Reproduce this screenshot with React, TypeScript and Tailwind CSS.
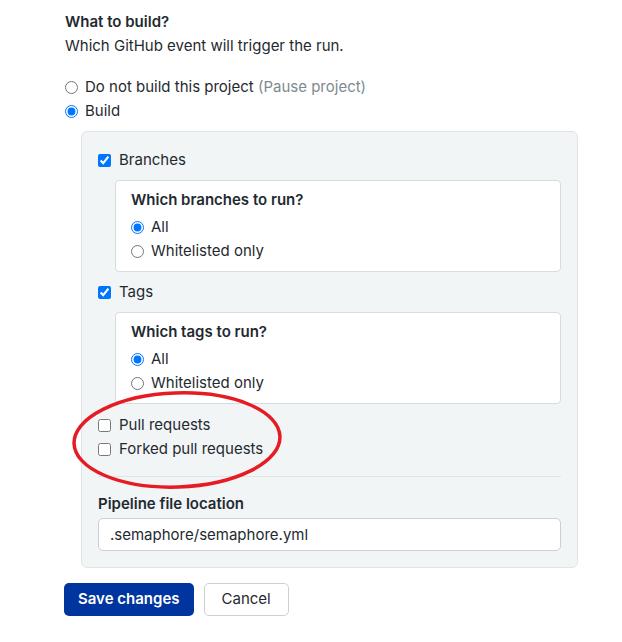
import React from 'react';

function Radio({ checked, label, extra }: { checked?: boolean; label: string; extra?: string }) {
    return (
        <label className="flex items-center h-6 gap-[7px]">
            <input type="radio" defaultChecked={checked} className="m-0 w-[13px] h-[13px] accent-[#0075ff]" />
            <span>
                {label}
                {extra && <span className="text-[#7d8a90]"> {extra}</span>}
            </span>
        </label>
    );
}

function Check({ checked, label }: { checked?: boolean; label: string }) {
    return (
        <label className="flex items-center h-6 gap-[8px]">
            <input type="checkbox" defaultChecked={checked} className="m-0 w-[13px] h-[13px] accent-[#0075ff]" />
            <span>{label}</span>
        </label>
    );
}

function RunBox({ title }: { title: string }) {
    return (
        <div className="ml-[17px] bg-white border border-[#d6dde0] rounded-[4px] px-[15px] pt-[7px] pb-[8px]">
            <div className="h-6 flex items-center font-semibold">{title}</div>
            <div className="mt-[3px]">
                <Radio checked label="All" />
                <Radio label="Whitelisted only" />
            </div>
        </div>
    );
}

export default function App() {
    return (
        <div className="relative w-[622px] h-[642px] bg-white font-['Inter',sans-serif] text-[15px] text-[#1f2a30]">
            <div className="pl-[65px] pt-[10px] w-[578px]">
                <div className="h-6 flex items-center font-semibold">What to build?</div>
                <div className="h-6 flex items-center">Which GitHub event will trigger the run.</div>

                <div className="mt-[17px]">
                    <Radio label="Do not build this project" extra="(Pause project)" />
                    <Radio checked label="Build" />
                </div>

                <div className="mt-[8px] ml-4 bg-[#f2f5f6] border border-[#dfe5e7] rounded-[6px] pl-4 pr-4 pt-4 pb-4">
                    <Check checked label="Branches" />
                    <div className="mt-2">
                        <RunBox title="Which branches to run?" />
                    </div>
                    <div className="mt-[8px]">
                        <Check checked label="Tags" />
                    </div>
                    <div className="mt-2">
                        <RunBox title="Which tags to run?" />
                    </div>
                    <div className="mt-[9px]">
                        <Check label="Pull requests" />
                        <Check label="Forked pull requests" />
                    </div>
                    <div className="mt-[15px] border-t border-[#dfe5e7]" />
                    <div className="mt-[15px] h-6 flex items-center font-semibold">Pipeline file location</div>
                    <input
                        type="text"
                        defaultValue=".semaphore/semaphore.yml"
                        className="mt-[2px] w-full h-[33px] px-[11px] bg-white border border-[#c9d1d5] rounded-[5px] outline-none text-[15px] text-[#1f2a30]"
                    />
                </div>

                <div className="mt-[15px] -ml-px flex gap-[10px]">
                    <button className="h-[33px] px-[14px] rounded-[5px] bg-[#00349e] text-white font-semibold">Save changes</button>
                    <button className="h-[33px] px-[17px] rounded-[5px] bg-white border border-[#c9d1d5] text-[#1f2a30]">Cancel</button>
                </div>
            </div>

            <svg className="absolute left-0 top-0 pointer-events-none" width="622" height="642" viewBox="0 0 622 642">
                <ellipse cx="177" cy="440" rx="103" ry="47" fill="none" stroke="#e61c24" strokeWidth="3.5" transform="rotate(-2 177 440)" />
            </svg>
        </div>
    );
}
